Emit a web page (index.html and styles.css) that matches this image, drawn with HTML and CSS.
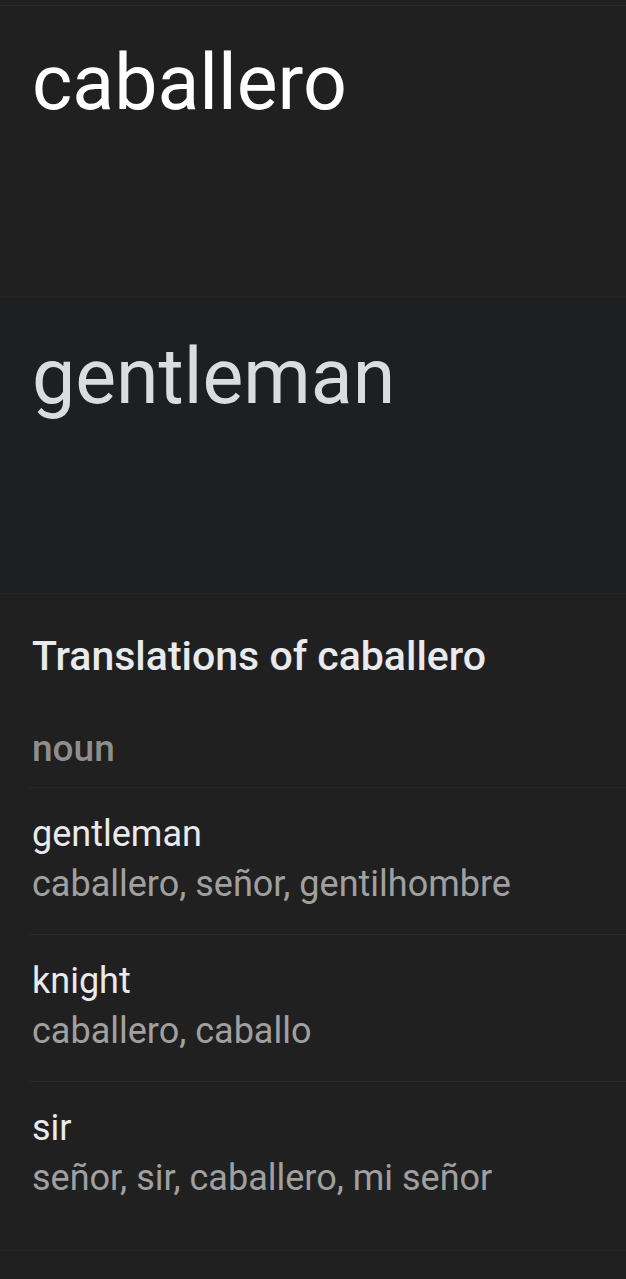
FILE: index.html
```html
<!DOCTYPE html>
<html lang="es">
<head>
  <meta charset="UTF-8">
  <meta name="viewport" content="width=device-width, initial-scale=1.0">
  <title>caballero</title>
  <link rel="stylesheet" href="styles.css">
</head>

<body>
  <div class="fuente">
    <div class="palabra">caballero</div>
  </div>

  <div class="destino">
    <div class="palabra traducida">gentleman</div>
  </div>

  <div class="traducciones">
    <h2>Translations of caballero</h2>
    <div class="tipo">noun</div>
    <ul class="lista">
      <li>
        <div class="termino">gentleman</div>
        <div class="sinonimos">caballero, señor, gentilhombre</div>
      </li>
      <li>
        <div class="termino">knight</div>
        <div class="sinonimos">caballero, caballo</div>
      </li>
      <li>
        <div class="termino">sir</div>
        <div class="sinonimos">señor, sir, caballero, mi señor</div>
      </li>
    </ul>
  </div>
</body>

</html>
```

FILE: styles.css
```css
body {
  font-family: Roboto, "Noto Sans", sans-serif;
  margin: 0;
  background-color: #202020;
  color: #e8eaed;
}
.fuente {
  box-sizing: border-box;
  border-top: 1px solid #2a2a2a;
  margin-top: 5px;
  padding: 38px 32px 0;
  height: 291px;
}
.palabra {
  font-size: 77px;
  line-height: 78px;
  color: #ffffff;
}
.destino {
  background-color: #1e1f21;
  border-top: 1px solid #232221;
  height: 297px;
  box-sizing: border-box;
  padding: 41px 32px 0;
}
.traducida {
  color: #dadce0;
}
.traducciones {
  border-top: 1px solid #262626;
  padding-top: 40px;
  border-bottom: 1px solid #262626;
}
h2 {
  margin: 0 32px;
  font-size: 41px;
  line-height: 44px;
  font-weight: 500;
  color: #e8eaed;
}
.tipo {
  margin: 53px 0 0 28px;
  padding: 0 0 20px 4px;
  font-size: 37px;
  line-height: 36px;
  font-weight: 500;
  color: #8e8e8e;
  border-bottom: 1px solid #262626;
}
.lista {
  list-style: none;
  margin: 0;
  padding: 0 0 22px 30px;
}
.lista li {
  padding: 21px 0 25px 2px;
  border-bottom: 1px solid #2a2a2a;
  font-size: 36px;
  line-height: 50px;
}
.lista li:last-child {
  border-bottom: none;
}
.termino {
  color: #e8eaed;
}
.sinonimos {
  color: #a0a0a0;
}
```
